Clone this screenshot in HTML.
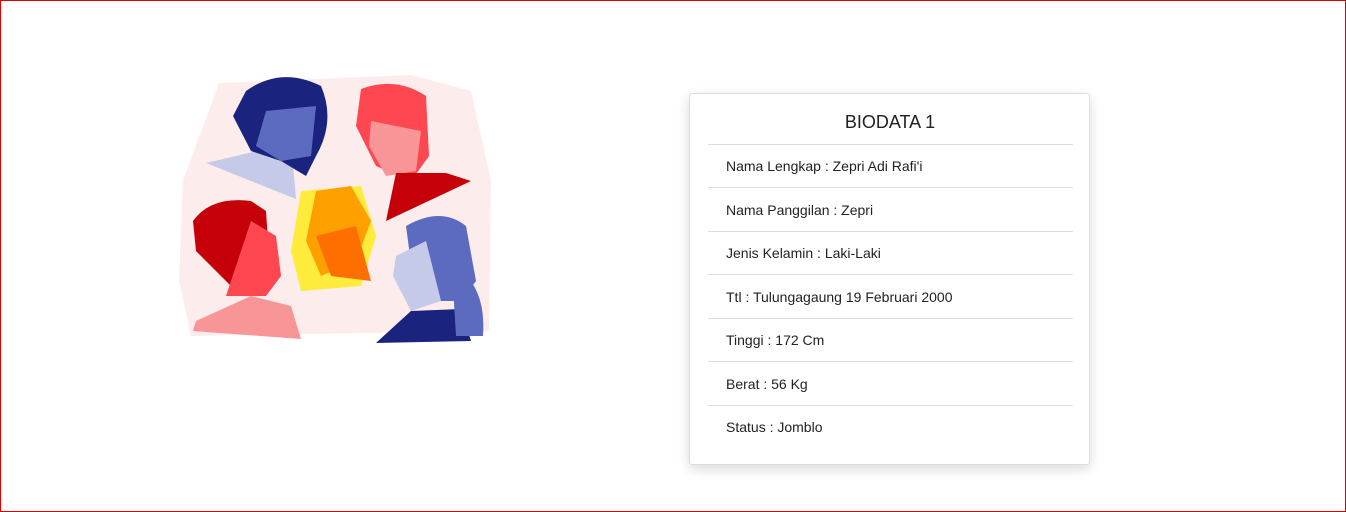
<!DOCTYPE html>
<html><head><style>
html,body{margin:0;padding:0}
body{width:1346px;height:512px;box-sizing:border-box;border:1px solid #e00000;background:#fff;position:relative;overflow:hidden;font-family:"Liberation Sans",sans-serif;color:#222}
.card{position:absolute;left:688px;top:92px;width:401px;height:372px;border:1px solid #ddd;border-radius:3px;background:#fff;box-shadow:0 4px 12px rgba(0,0,0,.15);box-sizing:border-box}
.t{position:absolute;left:0;right:0;top:111px;text-align:center;font-size:18px;color:#222}
.hr{position:absolute;left:707px;width:365px;height:1px;background:#dcdcdc}
.r{position:absolute;left:725px;font-size:14px;color:#222}
</style></head><body>
<svg style="position:absolute;left:170px;top:60px" width="340" height="290" viewBox="0 0 340 290">
<path d="M48 22 L240 14 L300 30 L320 120 L318 270 L20 275 L8 220 L12 120 Z" fill="#fdecec"/>
<path d="M35 102 L120 82 L125 138 Z" fill="#c5cae9"/>
<path d="M75 30 Q110 5 150 25 Q165 60 145 95 L135 115 L110 100 L80 90 L62 55 Z" fill="#1a237e"/>
<path d="M95 50 L145 45 L140 95 L110 100 L85 85 Z" fill="#5c6bc0"/>
<path d="M190 28 Q225 15 255 35 L258 95 L240 120 L205 105 L185 65 Z" fill="#ff4752"/>
<path d="M200 60 L250 70 L245 110 L215 115 L198 85 Z" fill="#f79597"/>
<path d="M225 112 L275 112 L300 120 L215 160 Z" fill="#c50008"/>
<path d="M130 130 L190 125 L205 175 L190 225 L130 230 L120 190 Z" fill="#ffeb3b"/>
<path d="M145 130 L180 125 L200 160 L185 200 L150 215 L135 180 Z" fill="#ffa000"/>
<path d="M145 175 L185 165 L200 220 L160 215 Z" fill="#ff6f00"/>
<path d="M22 160 Q40 135 80 140 L95 150 L100 225 L60 225 L25 190 Z" fill="#c50008"/>
<path d="M80 160 L105 175 L110 215 L95 235 L55 235 Z" fill="#ff4752"/>
<path d="M25 260 L80 235 L120 245 L130 278 L22 270 Z" fill="#f79597"/>
<path d="M235 165 Q270 145 295 165 L305 220 L290 240 L245 240 Z" fill="#5c6bc0"/>
<path d="M225 195 L255 180 L270 240 L240 250 L222 215 Z" fill="#c5cae9"/>
<path d="M205 282 L240 250 L290 248 L300 280 Z" fill="#1a237e"/>
<path d="M290 210 Q315 230 312 275 L285 275 L282 225 Z" fill="#5c6bc0"/>
</svg>
<div class="card"></div>
<div class="t" style="left:689px;width:400px">BIODATA 1</div>
<div class="hr" style="top:143px"></div>
<div class="r" style="top:157px">Nama Lengkap : Zepri Adi Rafi'i</div>
<div class="hr" style="top:186px"></div>
<div class="r" style="top:201px">Nama Panggilan : Zepri</div>
<div class="hr" style="top:230px"></div>
<div class="r" style="top:244px">Jenis Kelamin : Laki-Laki</div>
<div class="hr" style="top:273px"></div>
<div class="r" style="top:288px">Ttl : Tulungagaung 19 Februari 2000</div>
<div class="hr" style="top:317px"></div>
<div class="r" style="top:331px">Tinggi : 172 Cm</div>
<div class="hr" style="top:360px"></div>
<div class="r" style="top:375px">Berat : 56 Kg</div>
<div class="hr" style="top:404px"></div>
<div class="r" style="top:418px">Status : Jomblo</div>
</body></html>
